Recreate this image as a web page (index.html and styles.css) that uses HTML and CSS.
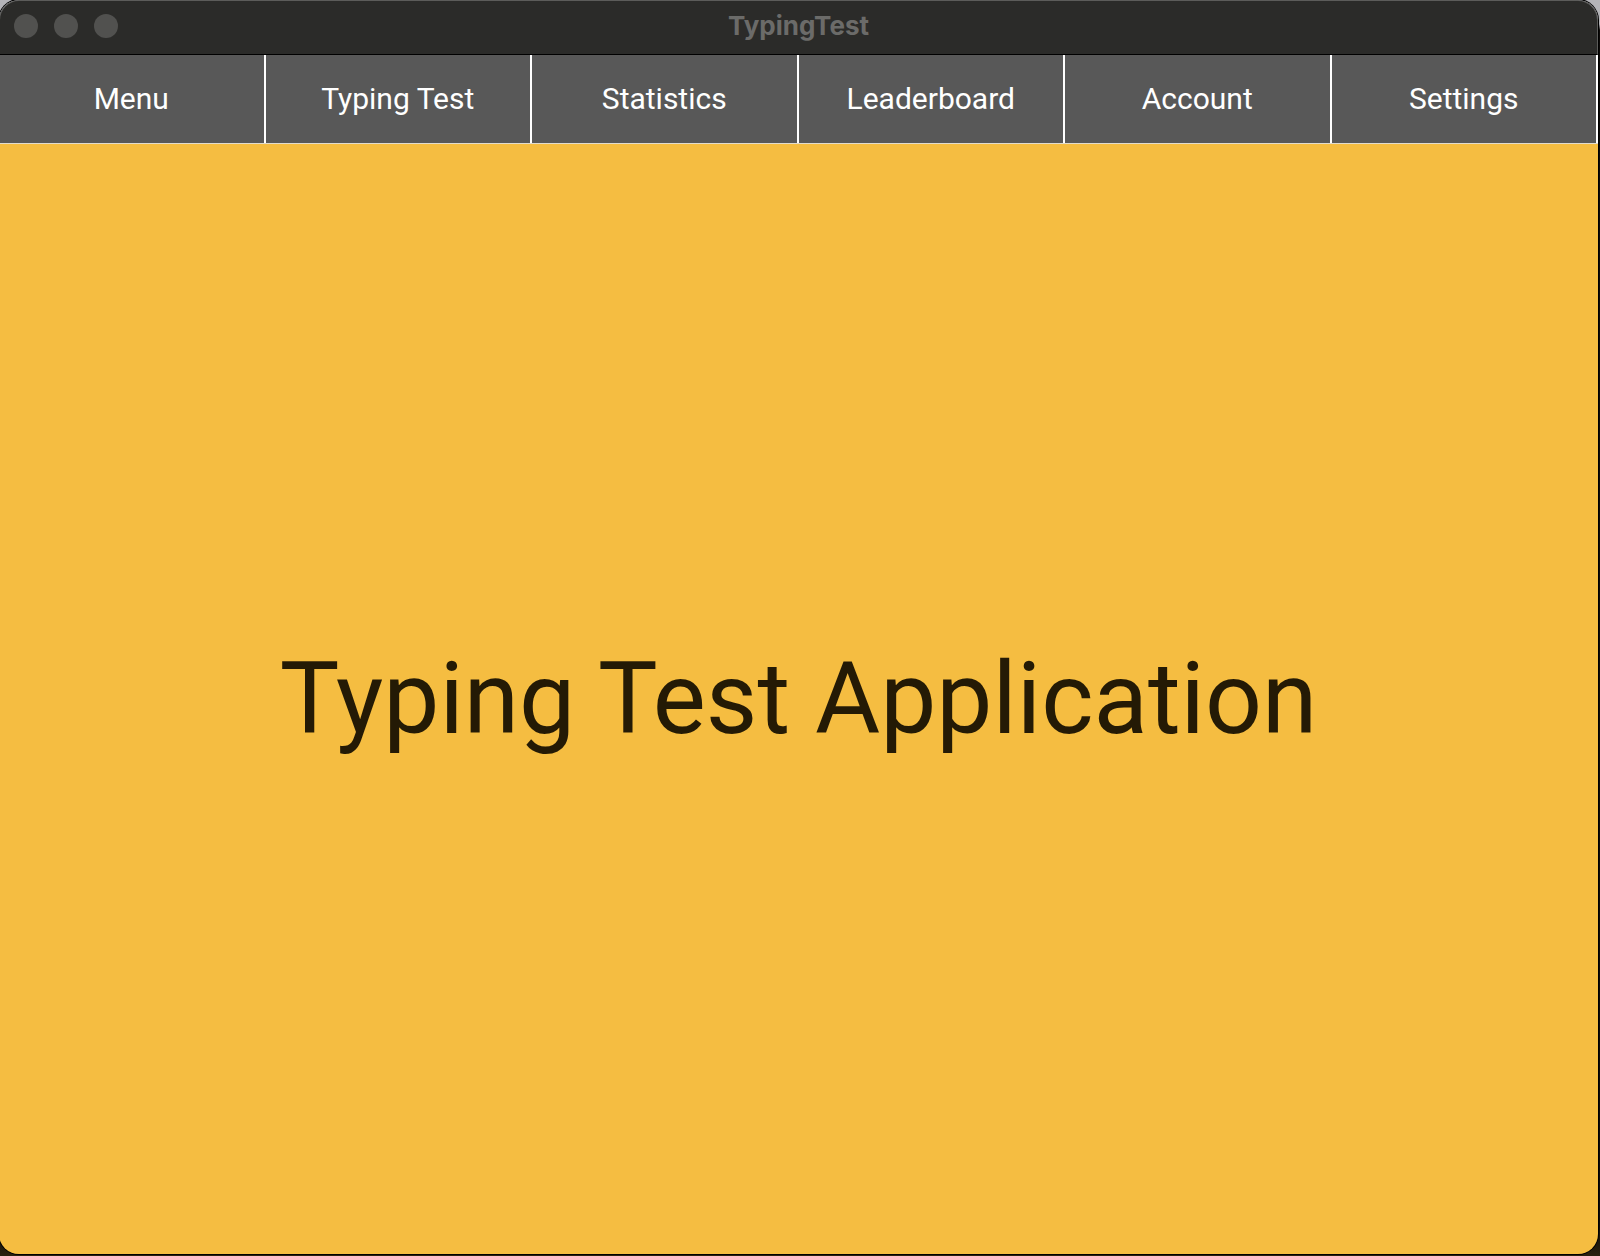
FILE: index.html
```html
<!DOCTYPE html>
<html lang="en">
<head>
<meta charset="utf-8">
<meta name="viewport" content="width=device-width, initial-scale=1">
<title>TypingTest</title>
<link rel="stylesheet" href="styles.css">
</head>
<body>
<div class="window">
  <header class="titlebar">
    <div class="controls">
      <button class="control" type="button" aria-label="Close"></button>
      <button class="control" type="button" aria-label="Minimize"></button>
      <button class="control" type="button" aria-label="Zoom"></button>
    </div>
    <span class="title">TypingTest</span>
  </header>
  <nav class="nav">
    <button class="tab" type="button">Menu</button>
    <button class="tab" type="button">Typing Test</button>
    <button class="tab" type="button">Statistics</button>
    <button class="tab" type="button">Leaderboard</button>
    <button class="tab" type="button">Account</button>
    <button class="tab" type="button">Settings</button>
  </nav>
  <main class="screen">
    <h1 class="heading">Typing Test Application</h1>
  </main>
</div>
</body>
</html>
```
FILE: styles.css
```css
* {
  box-sizing: border-box;
}

body {
  margin: 0;
  min-height: 100vh;
  display: flex;
  background: linear-gradient(#b4b4b8 0, #b4b4b8 24px, #0c0a08 30px, #0c0a08 calc(100% - 30px), #2a210f 100%);
  font-family: Roboto, sans-serif;
  overflow-x: hidden;
}

.window {
  flex: 1;
  display: flex;
  flex-direction: column;
  margin: 0 2px 2px -1px;
  border-radius: 20px;
  overflow: hidden;
  box-shadow: 0 0 0 1px #000;
}

.titlebar {
  display: grid;
  grid-template-columns: 1fr auto 1fr;
  align-items: center;
  height: 55px;
  padding: 0 14px 4px;
  background: #2b2b29;
  border: 1px solid #5c5c5a;
  border-bottom: 1px solid #000;
  border-radius: 20px 20px 0 0;
}

.controls {
  display: flex;
  gap: 16px;
}

.control {
  width: 24px;
  height: 24px;
  padding: 0;
  border: 0;
  border-radius: 50%;
  background: #51514f;
}

.title {
  font: 700 26px/32px Inter, sans-serif;
  color: #6b6b69;
}

.nav {
  display: grid;
  grid-template-columns: repeat(6, 1fr);
  border-bottom: 1px solid #e2dccd;
}

.tab {
  height: 88px;
  padding: 0;
  border: 0;
  border-right: 2px solid #fff;
  background: #585858;
  color: #fff;
  font: 400 30px/40px Roboto, sans-serif;
}

.screen {
  flex: 1;
  display: flex;
  align-items: center;
  justify-content: center;
  background: #f5bd41;
}

.heading {
  margin: 0;
  color: #241a05;
  font-size: 100px;
  font-weight: 400;
  line-height: 120px;
  text-align: center;
}
```
